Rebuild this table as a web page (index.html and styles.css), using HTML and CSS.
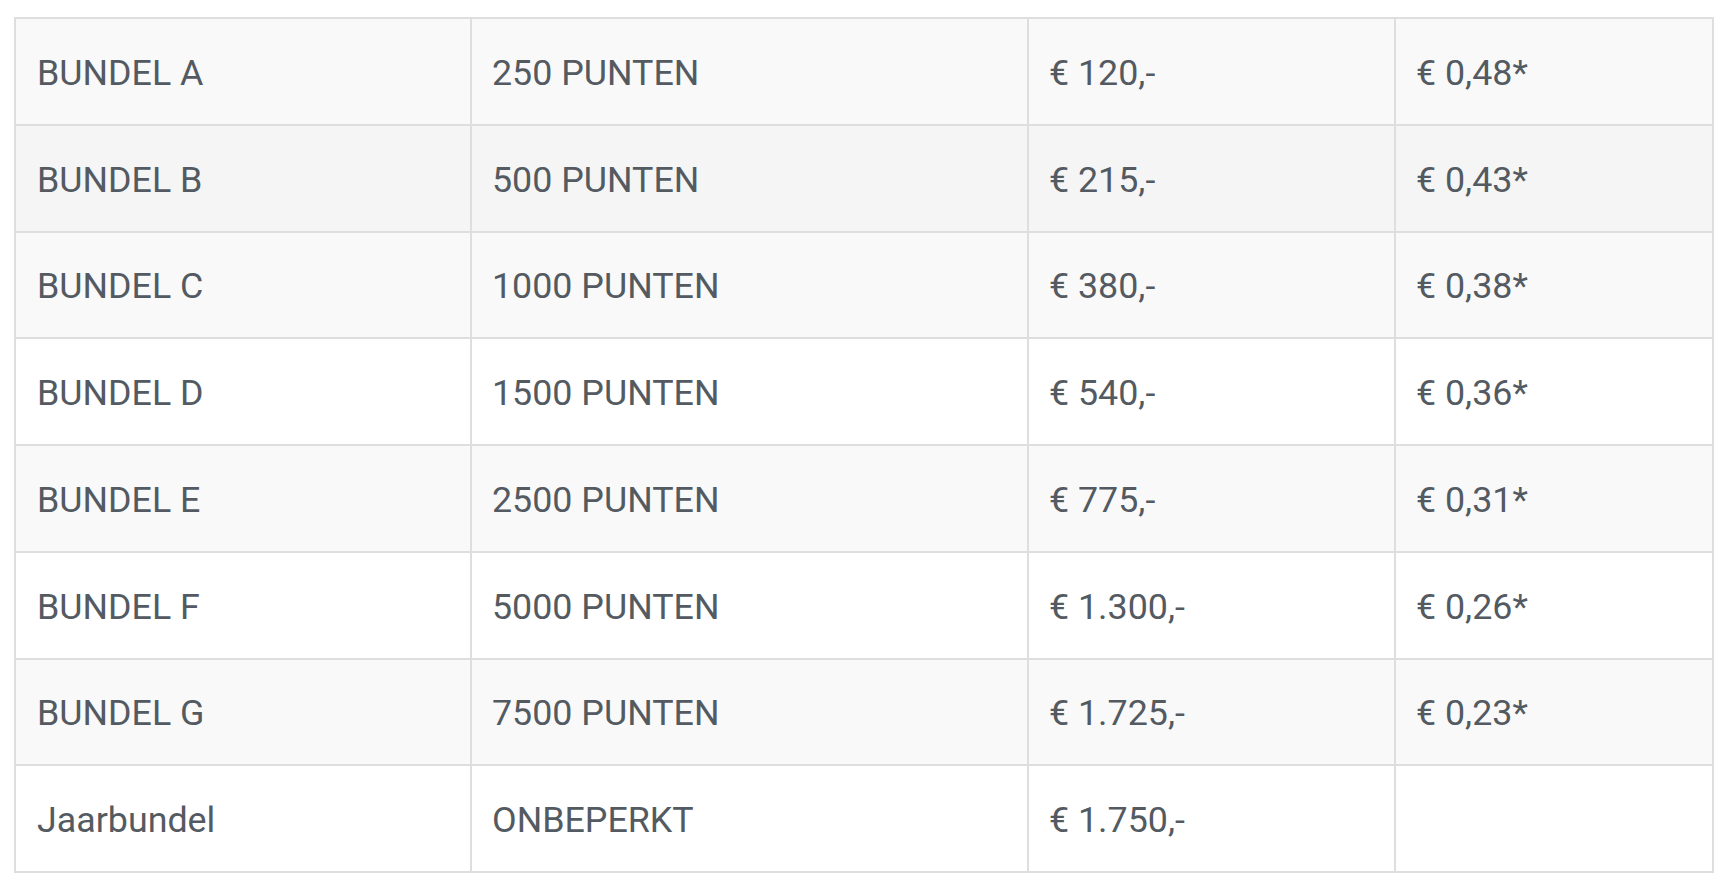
FILE: index.html
```html
<!DOCTYPE html>
<html lang="nl">
<head>
<meta charset="utf-8">
<title>Bundels</title>
<link rel="stylesheet" href="styles.css">
</head>
<body>
<div class="wrap">
<table class="prices">
  <colgroup>
    <col class="c1"><col class="c2"><col class="c3"><col class="c4">
  </colgroup>
  <tbody>
    <tr class="odd"><td>BUNDEL A</td><td>250 PUNTEN</td><td>€ 120,-</td><td>€ 0,48*</td></tr>
    <tr class="hover"><td>BUNDEL B</td><td>500 PUNTEN</td><td>€ 215,-</td><td>€ 0,43*</td></tr>
    <tr class="odd"><td>BUNDEL C</td><td>1000 PUNTEN</td><td>€ 380,-</td><td>€ 0,38*</td></tr>
    <tr><td>BUNDEL D</td><td>1500 PUNTEN</td><td>€ 540,-</td><td>€ 0,36*</td></tr>
    <tr class="odd"><td>BUNDEL E</td><td>2500 PUNTEN</td><td>€ 775,-</td><td>€ 0,31*</td></tr>
    <tr><td>BUNDEL F</td><td>5000 PUNTEN</td><td>€ 1.300,-</td><td>€ 0,26*</td></tr>
    <tr class="odd"><td>BUNDEL G</td><td>7500 PUNTEN</td><td>€ 1.725,-</td><td>€ 0,23*</td></tr>
    <tr><td>Jaarbundel</td><td>ONBEPERKT</td><td>€ 1.750,-</td><td></td></tr>
  </tbody>
</table>
</div>
</body>
</html>
```
FILE: styles.css
```css
html, body {
  margin: 0;
  padding: 0;
  background: #ffffff;
}
.wrap {
  padding: 17px 18px 15px 14px;
}
.prices {
  width: 1700px;
  border-collapse: collapse;
  table-layout: fixed;
  font-family: Roboto, "Liberation Sans", sans-serif;
  font-size: 35.8px;
  color: #535a61;
  border: 2px solid #dedede;
}
.c1 { width: 456px; }
.c2 { width: 557px; }
.c3 { width: 367px; }
.c4 { width: 318px; }
.prices tr {
  height: 106.75px;
  background: #ffffff;
}
.prices tr.odd {
  background: #f9f9f9;
}
.prices tr.hover {
  background: #f5f5f5;
}
.prices td {
  border: 2px solid #dedede;
  padding: 4px 20px 0;
  vertical-align: middle;
  line-height: 1.2;
  white-space: nowrap;
}
.prices td:first-child {
  padding-left: 21px;
}
```
